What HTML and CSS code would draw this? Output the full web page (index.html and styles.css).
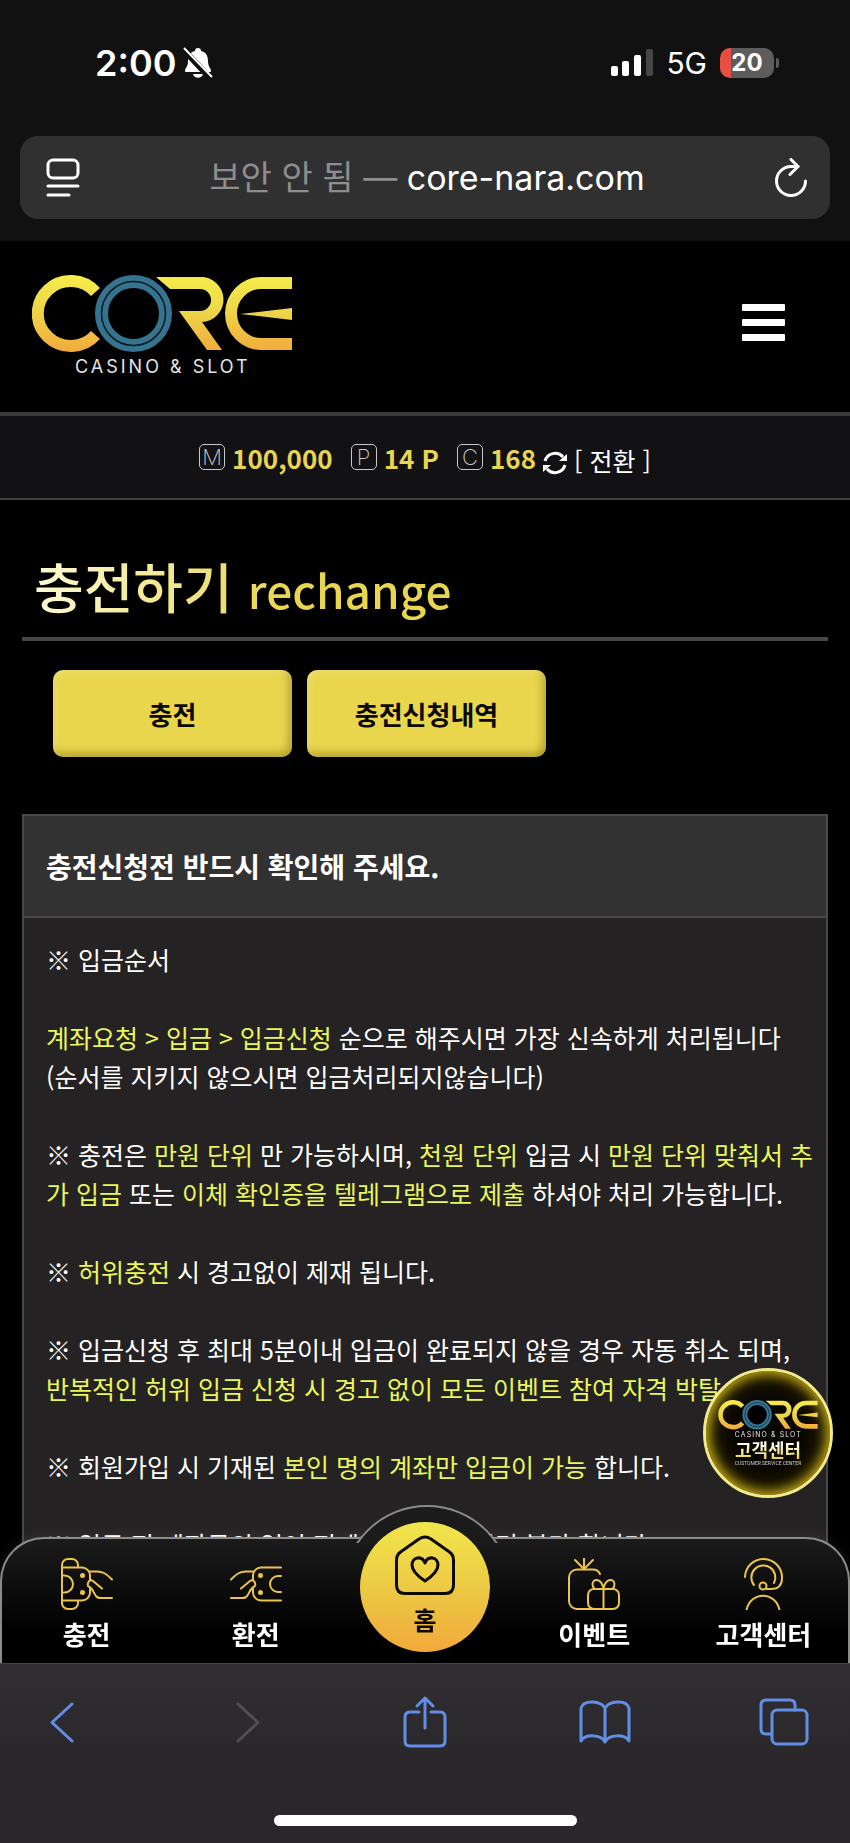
FILE: index.html
```html
<!DOCTYPE html>
<html lang="ko">
<head>
    <meta charset="UTF-8">
    <meta name="viewport" content="width=device-width, initial-scale=1.0">
    <title>CORE - 충전하기</title>
    <link rel="stylesheet" href="styles.css">
</head>
<body>
    <!-- Shared logo -->
    <svg class="defs" aria-hidden="true">
        <defs>
            <linearGradient id="gold" x1="0" y1="0" x2="0" y2="78" gradientUnits="userSpaceOnUse">
                <stop offset="0" stop-color="#f6ec4b"/>
                <stop offset="0.45" stop-color="#ecd748"/>
                <stop offset="1" stop-color="#f2a93c"/>
            </linearGradient>
            <symbol id="logo" viewBox="0 0 260 102">
                <path d="M63.500 17 A33 32.500 0 1 0 63.500 60" fill="none" stroke="url(#gold)" stroke-width="12"/>
                <circle cx="101.500" cy="38.500" r="39" fill="#000"/>
                <circle cx="101.500" cy="38.500" r="32" fill="none" stroke="#35738f" stroke-width="13"/>
                <circle cx="101.500" cy="38.500" r="32" fill="none" stroke="#061a22" stroke-width="1.500"/>
                <path d="M124 2H168a22.500 22.500 0 0 1 2 45L190 75H175L147 36H168a10.900 10.900 0 0 0 0-22H138Z" fill="url(#gold)"/>
                <path d="M260 2H229a36 36.500 0 0 0 0 73H260V63H229a24 24.500 0 0 1 0-49H260Z" fill="url(#gold)"/>
                <path d="M208 39L260 33V45Z" fill="url(#gold)"/>
                <text class="logo-text" x="43" y="98">CASINO &amp; SLOT</text>
            </symbol>
        </defs>
    </svg>

    <div class="status-bar">
        <div class="status-left">
            <span class="time">2:00</span>
            <svg width="30" height="32" viewBox="0 0 30 32">
                <path d="M15 1c2 0 3 1 3 3 5 1 7 5 7 10 0 6 3 7 3 10 0 1-1 1-2 1H4c-1 0-2 0-2-1 0-3 3-4 3-10 0-5 2-9 7-10 0-2 1-3 3-3Z" fill="#fff"/>
                <path d="M10 27h10c-1 5-9 5-10 0Z" fill="#fff"/>
                <path d="M0 2L28 32" stroke="#111" stroke-width="6"/>
                <path d="M1 1L29 30" stroke="#fff" stroke-width="2"/>
            </svg>
        </div>
        <div class="status-right">
            <svg width="42" height="28" viewBox="0 0 42 28">
                <rect x="0" y="17" width="7" height="10" rx="2" fill="#fff"/>
                <rect x="11" y="12" width="7" height="15" rx="2" fill="#fff"/>
                <rect x="23" y="6" width="7" height="21" rx="2" fill="#fff"/>
                <rect x="35" y="0" width="7" height="27" rx="2" fill="#464646"/>
            </svg>
            <span class="network">5G</span>
            <span class="battery">20</span>
        </div>
    </div>

    <div class="url-area">
        <div class="url-bar">
            <svg width="34" height="40" viewBox="0 0 34 40" fill="none" stroke="#fff" stroke-width="3" stroke-linecap="round">
                <rect x="2" y="2" width="30" height="18" rx="5"/>
                <path d="M2 28H32M2 37H23"/>
            </svg>
            <div class="url"><span class="insecure">보안 안 됨 —</span> core-nara.com</div>
            <svg width="34" height="40" viewBox="0 0 34 40" fill="none" stroke="#fff" stroke-width="3" stroke-linecap="round" stroke-linejoin="round">
                <path d="M24 8.500H17A14.500 14.500 0 1 0 31.500 23"/>
                <path d="M17 1.500L24 8.500L16 16.500"/>
            </svg>
        </div>
    </div>

    <header class="header">
        <a href="#" aria-label="CORE CASINO &amp; SLOT"><svg class="logo"><use href="#logo"/></svg></a>
        <button class="menu-button" aria-label="메뉴"><span></span><span></span><span></span></button>
    </header>

    <div class="wallet">
        <span class="coin">M</span><span class="amount">100,000</span>
        <span class="coin">P</span><span class="amount">14 P</span>
        <span class="coin">C</span><span class="amount amount-last">168</span>
        <button class="convert">
            <svg width="24" height="24" viewBox="0 0 24 24">
                <path d="M2 10A10.500 10.500 0 0 1 20 6M22 14A10.500 10.500 0 0 1 4 18" fill="none" stroke="#fff" stroke-width="3"/>
                <path d="M24 3V10H16ZM0 21V14H8Z" fill="#fff"/>
            </svg>
            [ 전환 ]
        </button>
    </div>

    <main class="content">
        <h1><span class="title-text">충전하기 <small>rechange</small></span></h1>

        <div class="tabs">
            <button class="tab">충전</button>
            <button class="tab">충전신청내역</button>
        </div>

        <section class="notice">
            <h2>충전신청전 반드시 확인해 주세요.</h2>
            <div class="notice-body">
                <p>※ 입금순서</p>
                <p><em>계좌요청 &gt; 입금 &gt; 입금신청</em> 순으로 해주시면 가장 신속하게 처리됩니다<br>(순서를 지키지 않으시면 입금처리되지않습니다)</p>
                <p>※ 충전은 <em>만원 단위</em> 만 가능하시며, <em>천원 단위</em> 입금 시 <em>만원 단위 맞춰서 추가 입금</em> 또는 <em>이체 확인증을 텔레그램으로 제출</em> 하셔야 처리 가능합니다.</p>
                <p>※ <em>허위충전</em> 시 경고없이 제재 됩니다.</p>
                <p>※ 입금신청 후 최대 5분이내 입금이 완료되지 않을 경우 자동 취소 되며,<br><em>반복적인 허위 입금 신청 시 경고 없이 모든 이벤트 참여 자격 박탈</em></p>
                <p>※ 회원가입 시 기재된 <em>본인 명의 계좌만 입금이 가능</em> 합니다.</p>
                <p>※ 입금 전 계좌문의 없이 전계좌 입금 시 처리 불가 합니다.</p>
            </div>
        </section>
    </main>

    <a class="support" href="#">
        <svg class="support-logo"><use href="#logo"/></svg>
        <strong>고객센터</strong>
        <small>CUSTOMER SERVICE CENTER</small>
    </a>

    <div class="dock">
        <nav class="bottom-nav">
            <a href="#">
                <svg width="52" height="52" viewBox="0 0 52 52">
                    <path d="M1 46V7a6 6 0 0 1 6-6h4a6 6 0 0 1 6 6v2M1 45a6 6 0 0 0 6 6h4a6 6 0 0 0 6-6v-2"/>
                    <path d="M1 9.500H21a8 8 0 0 1 8 8V22M1 42.500H21a8 8 0 0 0 8-8V31M1 17.500H3.500a8.500 8.500 0 0 1 0 17H1"/>
                    <circle class="dot" cx="21.500" cy="17.500" r="2.500"/>
                    <circle class="dot" cx="21.500" cy="34.500" r="2.500"/>
                    <path d="M29 13.500H36c6 0 9 2 15 8M41 30.500L32 23c-3-2-6 1-5 5 5 2 5 6 8 10q1 2 5 2H51"/>
                </svg>
                충전
            </a>
            <a href="#">
                <svg width="52" height="52" viewBox="0 0 52 52">
                    <path d="M51 9.500H31a8 8 0 0 0-8 8V22M51 42.500H31a8 8 0 0 1-8-8V31M51 18H48a8 8 0 0 0 0 16H51"/>
                    <circle class="dot" cx="30.500" cy="17.500" r="2.500"/>
                    <circle class="dot" cx="30.500" cy="34.500" r="2.500"/>
                    <path d="M23 13.500H16c-6 0-9 2-15 8M11 30.500L20 23c3-2 6 1 5 5-5 2-5 6-8 10q-1 2-5 2H1"/>
                </svg>
                환전
            </a>
            <a class="home" href="#">
                <span class="home-button">
                    <svg width="60" height="60" viewBox="0 0 60 60">
                        <path d="M1.500 25q0-5 4-8L24 4q6-4 12 0L54.500 17q4 3 4 8V50q0 8.500-8.500 8.500H10q-8.500 0-8.500-8.500Z"/>
                        <path d="M30 46C24 42 17 36 17 30c0-8 10-10 13-2 3-8 13-6 13 2 0 6-7 12-13 16Z"/>
                    </svg>
                    홈
                </span>
            </a>
            <a href="#">
                <svg width="52" height="52" viewBox="0 0 52 52">
                    <path d="M32 16q-2-4.500-7-4.500H9a8 8 0 0 0-8 8V43a8 8 0 0 0 8 8H30"/>
                    <path d="M16 11V0M16 11L7 2M16 11L25 2"/>
                    <rect x="20" y="31" width="31" height="20" rx="6"/>
                    <path d="M35.500 51V30C33 20 25 20 24.500 26q0 3 2 5M35.500 30C38 20 46 20 46.500 26q0 3-2 5"/>
                </svg>
                이벤트
            </a>
            <a href="#">
                <svg width="52" height="52" viewBox="0 0 52 52">
                    <path d="M8 19a18.500 18.500 0 0 1 37 1q0 11-11 11H29.500"/>
                    <path d="M17 27a12 12 0 1 1 20-2"/>
                    <circle cx="26" cy="28" r="3.500"/>
                    <path d="M9.500 52c4-19 29-19 33 0"/>
                </svg>
                고객센터
            </a>
        </nav>

        <div class="toolbar">
            <button aria-label="뒤로">
                <svg width="52" height="52" viewBox="0 0 52 52"><path d="M32 8L12 26.500L32 45"/></svg>
            </button>
            <button aria-label="앞으로" disabled>
                <svg width="52" height="52" viewBox="0 0 52 52"><path d="M18 8L38 26.500L18 45"/></svg>
            </button>
            <button aria-label="공유">
                <svg width="52" height="52" viewBox="0 0 52 52"><path d="M20 16H11q-5 0-5 5V45q0 5 5 5H41q5 0 5-5V21q0-5-5-5H32M26 32V2M18 10L26 2L34 10"/></svg>
            </button>
            <button aria-label="책갈피">
                <svg width="52" height="52" viewBox="0 0 52 52"><path d="M26 12C22 5 5 3 2 12V45C6 38 22 38 26 46C30 38 46 38 50 45V12C47 3 30 5 26 12V46"/></svg>
            </button>
            <button aria-label="탭">
                <svg width="52" height="52" viewBox="0 0 52 52"><path d="M13 38H8q-5 0-5-5V9q0-5 5-5H32q5 0 5 5V14"/><rect x="14" y="14" width="35" height="34" rx="5"/></svg>
            </button>
        </div>
        <div class="home-indicator"></div>
    </div>
</body>
</html>
```
FILE: styles.css
```css
/* General Styles */
* {
    box-sizing: border-box;
}

body {
    margin: 0;
    height: 100vh;
    display: flex;
    flex-direction: column;
    overflow: hidden;
    background-color: #000;
    color: #fff;
    font-family: 'Noto Sans CJK KR', sans-serif;
    font-size: 26px;
}

button {
    padding: 0;
    border: none;
    background: none;
    color: inherit;
    font: inherit;
    cursor: pointer;
}

a {
    color: inherit;
    text-decoration: none;
}

svg {
    display: block;
    flex-shrink: 0;
}

.defs {
    position: absolute;
    width: 0;
    height: 0;
}

/* Status Bar Styles */
.status-bar {
    flex-shrink: 0;
    display: flex;
    justify-content: space-between;
    align-items: center;
    height: 136px;
    padding: 0 76px 10px 95px;
    background-color: #111;
    font-family: 'Inter', sans-serif;
}

.status-left,
.status-right {
    display: flex;
    align-items: center;
    gap: 7px;
}

.status-right {
    gap: 13px;
}

.time {
    font-size: 36px;
    font-weight: 600;
}

.network {
    font-size: 30px;
}

.battery {
    position: relative;
    width: 54px;
    height: 30px;
    border-radius: 10px;
    background: linear-gradient(to right, #e94f41 11px, #5c5c5c 11px);
    font-size: 24px;
    font-weight: 700;
    line-height: 30px;
    text-align: center;
}

.battery::after {
    content: '';
    position: absolute;
    right: -5px;
    top: 10px;
    width: 3px;
    height: 10px;
    border-radius: 0 3px 3px 0;
    background-color: #5c5c5c;
}

/* Address Bar Styles */
.url-area {
    flex-shrink: 0;
    padding: 0 20px 22px;
    background-color: #111;
}

.url-bar {
    display: flex;
    justify-content: space-between;
    align-items: center;
    height: 83px;
    padding: 0 22px 0 26px;
    border-radius: 18px;
    background-color: #303030;
}

.url {
    padding-bottom: 4px;
    font-family: 'Inter', 'Noto Sans CJK KR', sans-serif;
    font-size: 34px;
    white-space: nowrap;
}

.insecure {
    color: #8e8e8e;
}

/* Header Styles */
.header {
    flex-shrink: 0;
    display: flex;
    justify-content: space-between;
    align-items: flex-start;
    height: 175px;
    padding: 34px 65px 0 32px;
    border-bottom: 4px solid #3a3a3b;
    background-color: #000;
}

.logo {
    width: 260px;
    height: 102px;
}

.logo-text {
    font-family: 'Inter', sans-serif;
    font-size: 18px;
    letter-spacing: 3px;
    fill: #e4e4e4;
}

.menu-button {
    display: flex;
    flex-direction: column;
    gap: 8px;
    margin-top: 29px;
}

.menu-button span {
    width: 43px;
    height: 7px;
    border-radius: 1px;
    background-color: #fff;
}

/* Wallet Styles */
.wallet {
    flex-shrink: 0;
    display: flex;
    justify-content: center;
    align-items: center;
    height: 84px;
    border-bottom: 2px solid #3f3f41;
    background-color: #121113;
}

.coin {
    width: 26px;
    height: 26px;
    border: 1px solid #c8c8c8;
    border-radius: 5px;
    color: #c8c8c8;
    font-family: 'Inter', sans-serif;
    font-size: 22px;
    font-weight: 200;
    line-height: 24px;
    text-align: center;
}

.amount {
    margin: 0 18px 0 7px;
    color: #e9d553;
    font-weight: 700;
}

.amount-last {
    margin-right: 7px;
}

.convert {
    display: flex;
    align-items: center;
    gap: 7px;
    margin-top: 6px;
    font-size: 25px;
}

.convert svg {
    margin-top: 6px;
}

/* Content Styles */
.content {
    flex: 1;
    min-height: 0;
    overflow: hidden;
    padding: 0 22px;
}

h1 {
    height: 141px;
    margin: 0;
    padding: 46px 12px 0;
    border-bottom: 4px solid #464647;
    font-size: 54px;
    font-weight: 500;
    line-height: 80px;
}

.title-text {
    background: linear-gradient(100deg, #fdfbd8, #e9d650 60%);
    -webkit-background-clip: text;
    background-clip: text;
    color: transparent;
}

h1 small {
    font-size: 46px;
}

.tabs {
    display: flex;
    gap: 15px;
    margin: 29px 0 57px 31px;
}

.tab {
    width: 239px;
    height: 87px;
    border-radius: 10px;
    background-color: #ead64c;
    box-shadow: inset 3px 3px 6px rgba(255, 255, 200, 0.3), inset -3px -4px 8px rgba(90, 75, 0, 0.4);
    color: #0b0a02;
    font-weight: 700;
}

/* Notice Styles */
.notice {
    min-height: 100%;
    border: 2px solid #49494b;
    background-color: #242223;
}

.notice h2 {
    margin: 0;
    padding: 0 22px;
    border-bottom: 2px solid #49494b;
    background-color: #333233;
    font-size: 28px;
    font-weight: 700;
    line-height: 100px;
}

.notice-body {
    padding: 22px 0 0 22px;
    font-size: 25px;
    line-height: 39px;
    word-break: break-all;
}

.notice p {
    margin: 0 0 39px;
}

.notice em {
    color: #e9f65c;
    font-style: normal;
}

/* Support Badge Styles */
.support {
    position: fixed;
    right: 17px;
    bottom: 345px;
    z-index: 2;
    display: flex;
    flex-direction: column;
    align-items: center;
    width: 130px;
    height: 130px;
    padding-top: 29px;
    border: 3px solid #f3ea8b;
    border-radius: 50%;
    background-color: #080600;
    box-shadow: inset 0 0 12px 3px #c5ae17, inset 0 0 28px #5c4c05;
}

.support-logo {
    width: 100px;
    height: 39px;
}

.support strong {
    background: linear-gradient(#fff 20%, #ead64c);
    -webkit-background-clip: text;
    background-clip: text;
    color: transparent;
    font-size: 18px;
    line-height: 20px;
}

.support small {
    color: #cfcfcf;
    font-family: 'Roboto', sans-serif;
    font-size: 5px;
    line-height: 8px;
}

/* Dock Styles */
.dock {
    position: fixed;
    left: 0;
    right: 0;
    bottom: 0;
    z-index: 1;
}

.bottom-nav {
    display: grid;
    grid-template-columns: repeat(5, 1fr);
    height: 126px;
    padding-top: 19px;
    border: 2px solid #8b8b89;
    border-bottom: none;
    border-radius: 44px 44px 0 0;
    background: linear-gradient(#1c1b1b, #000 75%);
    box-shadow: 0 0 14px rgba(160, 160, 160, 0.15);
    font-weight: 700;
}

.bottom-nav a {
    display: flex;
    flex-direction: column;
    align-items: center;
    gap: 4px;
    line-height: 40px;
}

.bottom-nav svg {
    fill: none;
    stroke: #ecc44c;
    stroke-width: 2;
    stroke-linecap: round;
    stroke-linejoin: round;
}

.bottom-nav .dot {
    fill: #ecc44c;
    stroke: none;
}

/* Raised arch behind the home button */
.bottom-nav .home {
    position: relative;
}

.home::before {
    content: '';
    position: absolute;
    left: 50%;
    top: -53px;
    width: 166px;
    height: 166px;
    margin-left: -83px;
    border: 2px solid #8b8b89;
    border-radius: 50%;
    background-color: #1c1b1b;
    clip-path: inset(0 0 132px 0);
}

.home-button {
    position: absolute;
    top: -36px;
    display: flex;
    flex-direction: column;
    align-items: center;
    gap: 4px;
    width: 130px;
    height: 130px;
    padding-top: 13px;
    border-radius: 50%;
    background: linear-gradient(#f1e64c, #ecc743 55%, #f2a93c);
    color: #0d0a02;
    font-size: 25px;
    line-height: 40px;
}

.home-button svg {
    stroke: #0d0a02;
    stroke-width: 3;
}

/* Browser Toolbar Styles */
.toolbar {
    display: flex;
    justify-content: space-between;
    height: 152px;
    padding: 32px 40px 0;
    border-top: 1px solid #444;
    background: linear-gradient(#302e30, #29272a 70%);
}

.toolbar svg {
    width: 52px;
    height: 52px;
    fill: none;
    stroke: #628ee8;
    stroke-width: 3;
    stroke-linecap: round;
    stroke-linejoin: round;
}

.toolbar button {
    align-self: flex-start;
}

.toolbar button:disabled svg {
    stroke: #505052;
}

.home-indicator {
    height: 28px;
    background-color: #29272a;
}

.home-indicator::before {
    content: '';
    display: block;
    width: 303px;
    height: 11px;
    margin: 0 auto;
    border-radius: 6px;
    background-color: #fff;
}
```
